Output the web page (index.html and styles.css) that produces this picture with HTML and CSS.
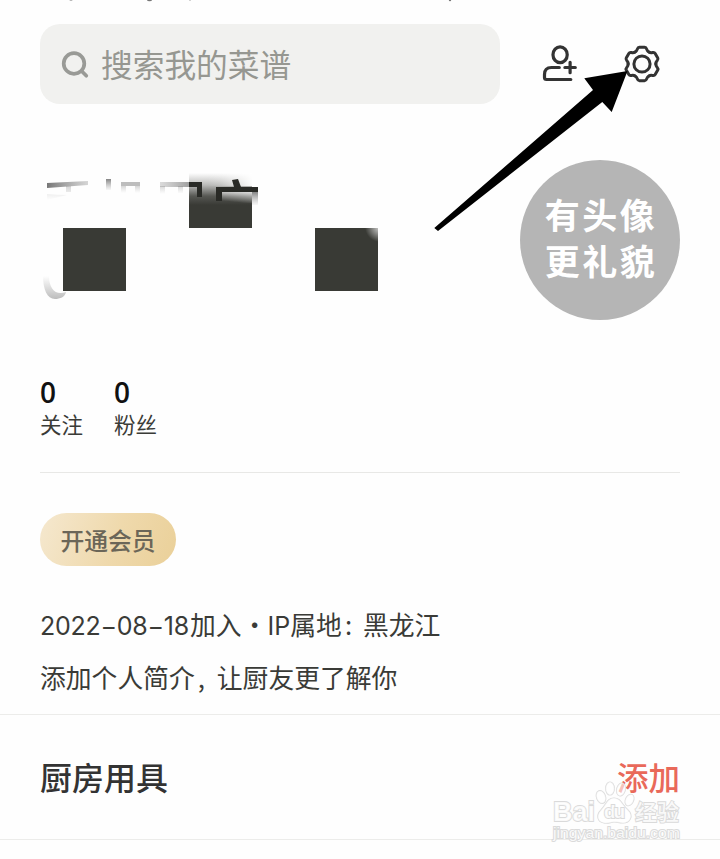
FILE: index.html
```html
<!DOCTYPE html>
<html lang="zh-CN">
<head>
<meta charset="utf-8">
<title>我的厨房</title>
<link rel="stylesheet" href="styles.css">
</head>
<body>
<main class="page">
  <svg class="clipped" width="720" height="3" viewBox="0 0 720 3"><g fill="#777"><ellipse cx="71" cy="0" rx="1.5" ry=".6"/><ellipse cx="149.500" cy="0" rx="2.500" ry="1.200"/><ellipse cx="190" cy="0" rx="1" ry=".4"/><ellipse cx="450" cy="0" rx="1.200" ry="1.200"/></g></svg>
  <header class="topbar">
    <div class="search">
      <svg class="search-icon" width="28" height="28" viewBox="0 0 28 28" fill="none" stroke="#999a96" stroke-width="3.700" stroke-linecap="round"><circle cx="13" cy="12.500" r="10.300"/><path d="M20.800 20.300 25.300 24.800"/></svg>
      <span class="search-text">搜索我的菜谱</span>
    </div>
    <svg class="icon-user" width="40" height="40" viewBox="540 44 40 40" fill="none" stroke="#333" stroke-width="3.200" stroke-linecap="round" stroke-linejoin="round"><rect x="553" y="46.800" width="14.200" height="15.900" rx="7.100" ry="7.700"/><path d="M559.300 67.500H551.500Q544.500 67.500 544.500 74.500V77.500Q544.500 79.500 546.500 79.500H570.800M564.900 67.500H575.300M570.100 62.300V72.700"/></svg>
    <svg class="icon-gear" width="40" height="40" viewBox="-20 -20 40 40" fill="none" stroke="#333" stroke-width="3" stroke-linecap="round" stroke-linejoin="round">
      <defs><path id="tooth" d="M-6.900-12C-3.700-13.600-5.500-16.700-2.600-16.700H2.600C5.500-16.700 3.700-13.600 6.900-12"/></defs>
      <circle r="8.100"/><use href="#tooth"/><use href="#tooth" transform="rotate(60)"/><use href="#tooth" transform="rotate(120)"/><use href="#tooth" transform="rotate(180)"/><use href="#tooth" transform="rotate(240)"/><use href="#tooth" transform="rotate(300)"/>
    </svg>
  </header>

  <section class="profile">
    <svg class="masked-name" width="350" height="160" viewBox="40 160 350 160">
      <defs>
        <linearGradient id="down" x2="0" y2="1"><stop stop-color="#333" stop-opacity=".6"/><stop offset="1" stop-color="#777" stop-opacity=".05"/></linearGradient>
        <linearGradient id="streak"><stop stop-color="#555" stop-opacity=".8"/><stop offset="1" stop-color="#777" stop-opacity=".3"/></linearGradient>
        <linearGradient id="side"><stop stop-color="#555" stop-opacity=".75"/><stop offset="1" stop-color="#888" stop-opacity=".3"/></linearGradient>
        <linearGradient id="stem" x2="0" y2="1"><stop stop-color="#777" stop-opacity=".3"/><stop offset="1" stop-color="#999" stop-opacity="0"/></linearGradient>
        <linearGradient id="block" x2="0" y2="1"><stop stop-color="#393a35" stop-opacity="0"/><stop offset=".22" stop-color="#393a35" stop-opacity=".35"/><stop offset=".42" stop-color="#393a35" stop-opacity=".85"/><stop offset=".58" stop-color="#393a35"/></linearGradient>
        <linearGradient id="blockfade"><stop stop-color="#fff" stop-opacity="0"/><stop offset=".3" stop-color="#fff" stop-opacity=".15"/><stop offset="1" stop-color="#fff" stop-opacity=".95"/></linearGradient>
        <linearGradient id="gap" x1="1" y1="0" x2=".7" y2="1"><stop stop-color="#fff" stop-opacity=".75"/><stop offset="1" stop-color="#fff" stop-opacity="0"/></linearGradient>
        <linearGradient id="bowl" x2="0" y2="1"><stop stop-color="#999" stop-opacity="0"/><stop offset="1" stop-color="#999" stop-opacity=".65"/></linearGradient>
        <radialGradient id="corner" gradientUnits="userSpaceOnUse" cx="380" cy="227" r="15"><stop stop-color="#fff" stop-opacity=".8"/><stop offset="1" stop-color="#fff" stop-opacity="0"/></radialGradient>
      </defs>
      <path fill="url(#streak)" d="M47 183 88 181V185L47 188Z"/>
      <path fill="url(#stem)" d="M66 186h5v6h-5zM47 194q10 1 20 1l-20 5z"/>
      <path fill="url(#down)" d="M106 179h5v11h-5z"/>
      <path fill="#999" fill-opacity=".65" d="M121 182h19v4h-19z"/>
      <path fill="url(#stem)" d="M121 186h5v7h-5zM135 186h5v7h-5z"/>
      <rect x="189" y="173" width="63" height="55" fill="url(#block)"/>
      <path fill="url(#blockfade)" d="M208 173h44v13h-44z"/>
      <path fill="url(#side)" transform="translate(362) scale(-1 1)" d="M160 182h42v5h-42z"/>
      <path fill="url(#stem)" d="M160 186h5v8h-5zM178 186h5v7h-5z"/>
      <path fill="#292a26" d="M189 182h13v15h-5v-10h-8zM216 187h18l-2-7 6-1 3 8h17v5h-36v9h-6z"/>
      <path fill="url(#gap)" d="M222 192h30v11h-30z"/>
      <path fill="url(#down)" d="M252 192h6v13h-6z"/>
      <path fill="#393a35" d="M63 228h63v63H63zM315 228h63v63h-63z"/>
      <path fill="url(#corner)" d="M365 228h13v16h-13z"/>
      <path fill="url(#bowl)" d="M43 276h6c0 13 7 20 17 16-1 5-6 7-11 7-8 0-12-10-12-23z"/>
    </svg>
    <div class="avatar"><span>有头像</span><span>更礼貌</span></div>
  </section>

  <section class="stats">
    <div class="stat"><b>0</b><span>关注</span></div>
    <div class="stat"><b>0</b><span>粉丝</span></div>
  </section>

  <section class="about">
    <div class="member">开通会员</div>
    <p class="joined"><span class="date">2022−08−18</span>加入<span class="dot">•</span><span class="ip">IP</span>属地<span class="colon">:</span>黑龙江</p>
    <p class="bio">添加个人简介<span class="comma">,</span>让厨友更了解你</p>
  </section>

  <section class="tools">
    <h2>厨房用具</h2>
    <span class="add">添加</span>
  </section>

  <svg class="arrow" width="200" height="166" viewBox="430 68 200 166"><path d="M434.300 228 593 90 584.300 78.300 627.500 71 611.700 112 602.300 102 438 231Z"/></svg>
  <svg class="watermark" width="140" height="68" viewBox="548 776 140 68">
    <g fill="#fff" fill-opacity=".85" stroke="#dadada" stroke-width="1.800" paint-order="stroke">
      <text x="553" y="821" class="wm-brand" textLength="42" lengthAdjust="spacingAndGlyphs">Bai</text>
      <g fill-opacity=".6" stroke-width="1.200"><ellipse cx="601" cy="797" rx="4.500" ry="6.500" transform="rotate(-20 601 797)"/><ellipse cx="610" cy="788.500" rx="4.300" ry="6.500"/><ellipse cx="621" cy="789.500" rx="4.300" ry="6.500" transform="rotate(15 621 789.500)"/><ellipse cx="629.500" cy="800" rx="4" ry="6" transform="rotate(25 629.500 800)"/>
      <path d="M614 798c7 0 8 7 14 12 6 6 2 13-5 13-4 0-6-1-9-1s-6 2-10 1c-7-1-8-8-3-13s6-12 13-12z"/></g>
      <text x="604" y="818" class="wm-du" textLength="21">du</text>
      <text x="635" y="820" class="wm-cn" textLength="44">经验</text>
      <text x="553" y="838" class="wm-url" textLength="127" lengthAdjust="spacingAndGlyphs">jingyan.baidu.com</text>
    </g>
  </svg>
</main>
</body>
</html>
```
FILE: styles.css
```css
* { box-sizing: border-box; }
body {
  margin: 0;
  background: #fefefe;
  color: #3a3b37;
  font-family: "Noto Sans CJK SC", sans-serif;
}
.page { position: relative; width: 720px; height: 859px; overflow: hidden; }
svg { display: block; flex: none; }
.clipped { height: 3px; }
.topbar { display: flex; align-items: center; margin-top: 21px; padding: 0 40px; height: 80px; }
.search {
  display: flex; align-items: center;
  width: 460px; height: 80px; padding-left: 21px;
  border-radius: 20px; background: #f1f1ef;
}
.search-icon { margin-top: 2px; }
.search-text { margin: -2px 0 0 12px; color: #969791; font-size: 31.7px; line-height: 40px; }
.icon-user { margin-left: 40px; }
.icon-gear { margin-left: 42px; }
.profile { display: flex; justify-content: space-between; margin-top: 56px; padding: 0 40px; height: 160px; }
.avatar {
  display: flex; flex-direction: column; align-items: center;
  width: 160px; height: 160px; padding-top: 31px;
  border-radius: 50%; background: #b5b5b5;
  color: #fff; font-size: 35px; font-weight: 700; letter-spacing: 2.5px; line-height: 46px;
}
.avatar span { margin-left: 2px; }
.stats {
  display: flex; gap: 31px; height: 153px; margin: 0 40px; padding-top: 56px;
  border-bottom: 1px solid #e8e8e6;
}
.stat { display: flex; flex-direction: column; width: 43px; }
.stat b { color: #111; font: 600 28px/33px "Open Sans", sans-serif; }
.stat span { font-size: 21.5px; line-height: 30px; white-space: nowrap; }
.about { height: 242px; padding: 40px 40px 0; border-bottom: 1px solid #ececea; }
.member {
  width: 136px; height: 53px; border-radius: 27px;
  background: linear-gradient(110deg, #f5e8cf, #efd9ac 55%, #ead099);
  color: #6b6658; font-size: 23.8px; font-weight: 500; line-height: 53px; text-align: center;
}
.joined, .bio { margin: 0; font-size: 25.8px; line-height: 52px; white-space: nowrap; }
.joined { margin-top: 32px; }
.bio { margin-top: -1px; }
.date, .ip { font-family: Inter, sans-serif; font-size: 25px; }
.date { display: inline-block; width: 150px; letter-spacing: -.25px; }
.dot { display: inline-block; width: 26px; text-align: center; }
.colon { display: inline-block; width: 21px; padding-left: 3px; }
.comma { display: inline-block; width: 22px; padding-left: 3px; }
.tools {
  display: flex; align-items: center; justify-content: space-between;
  height: 125px; padding: 0 40px; border-bottom: 1px solid #ececea;
}
h2 { margin: -2px 0 0; color: #333; font-size: 32px; font-weight: 500; }
.add { margin-top: -2px; color: #e9695a; font-size: 31.5px; font-weight: 500; }
.arrow { position: absolute; left: 430px; top: 68px; }
.watermark { position: absolute; left: 548px; top: 776px; }
.wm-brand { font: 700 28px "Liberation Sans", sans-serif; }
.wm-du { font: 700 19px "Liberation Sans", sans-serif; }
.wm-cn { font: 500 22px "Noto Sans CJK SC", sans-serif; }
.wm-url { font: 14px "Liberation Sans", sans-serif; }
```
